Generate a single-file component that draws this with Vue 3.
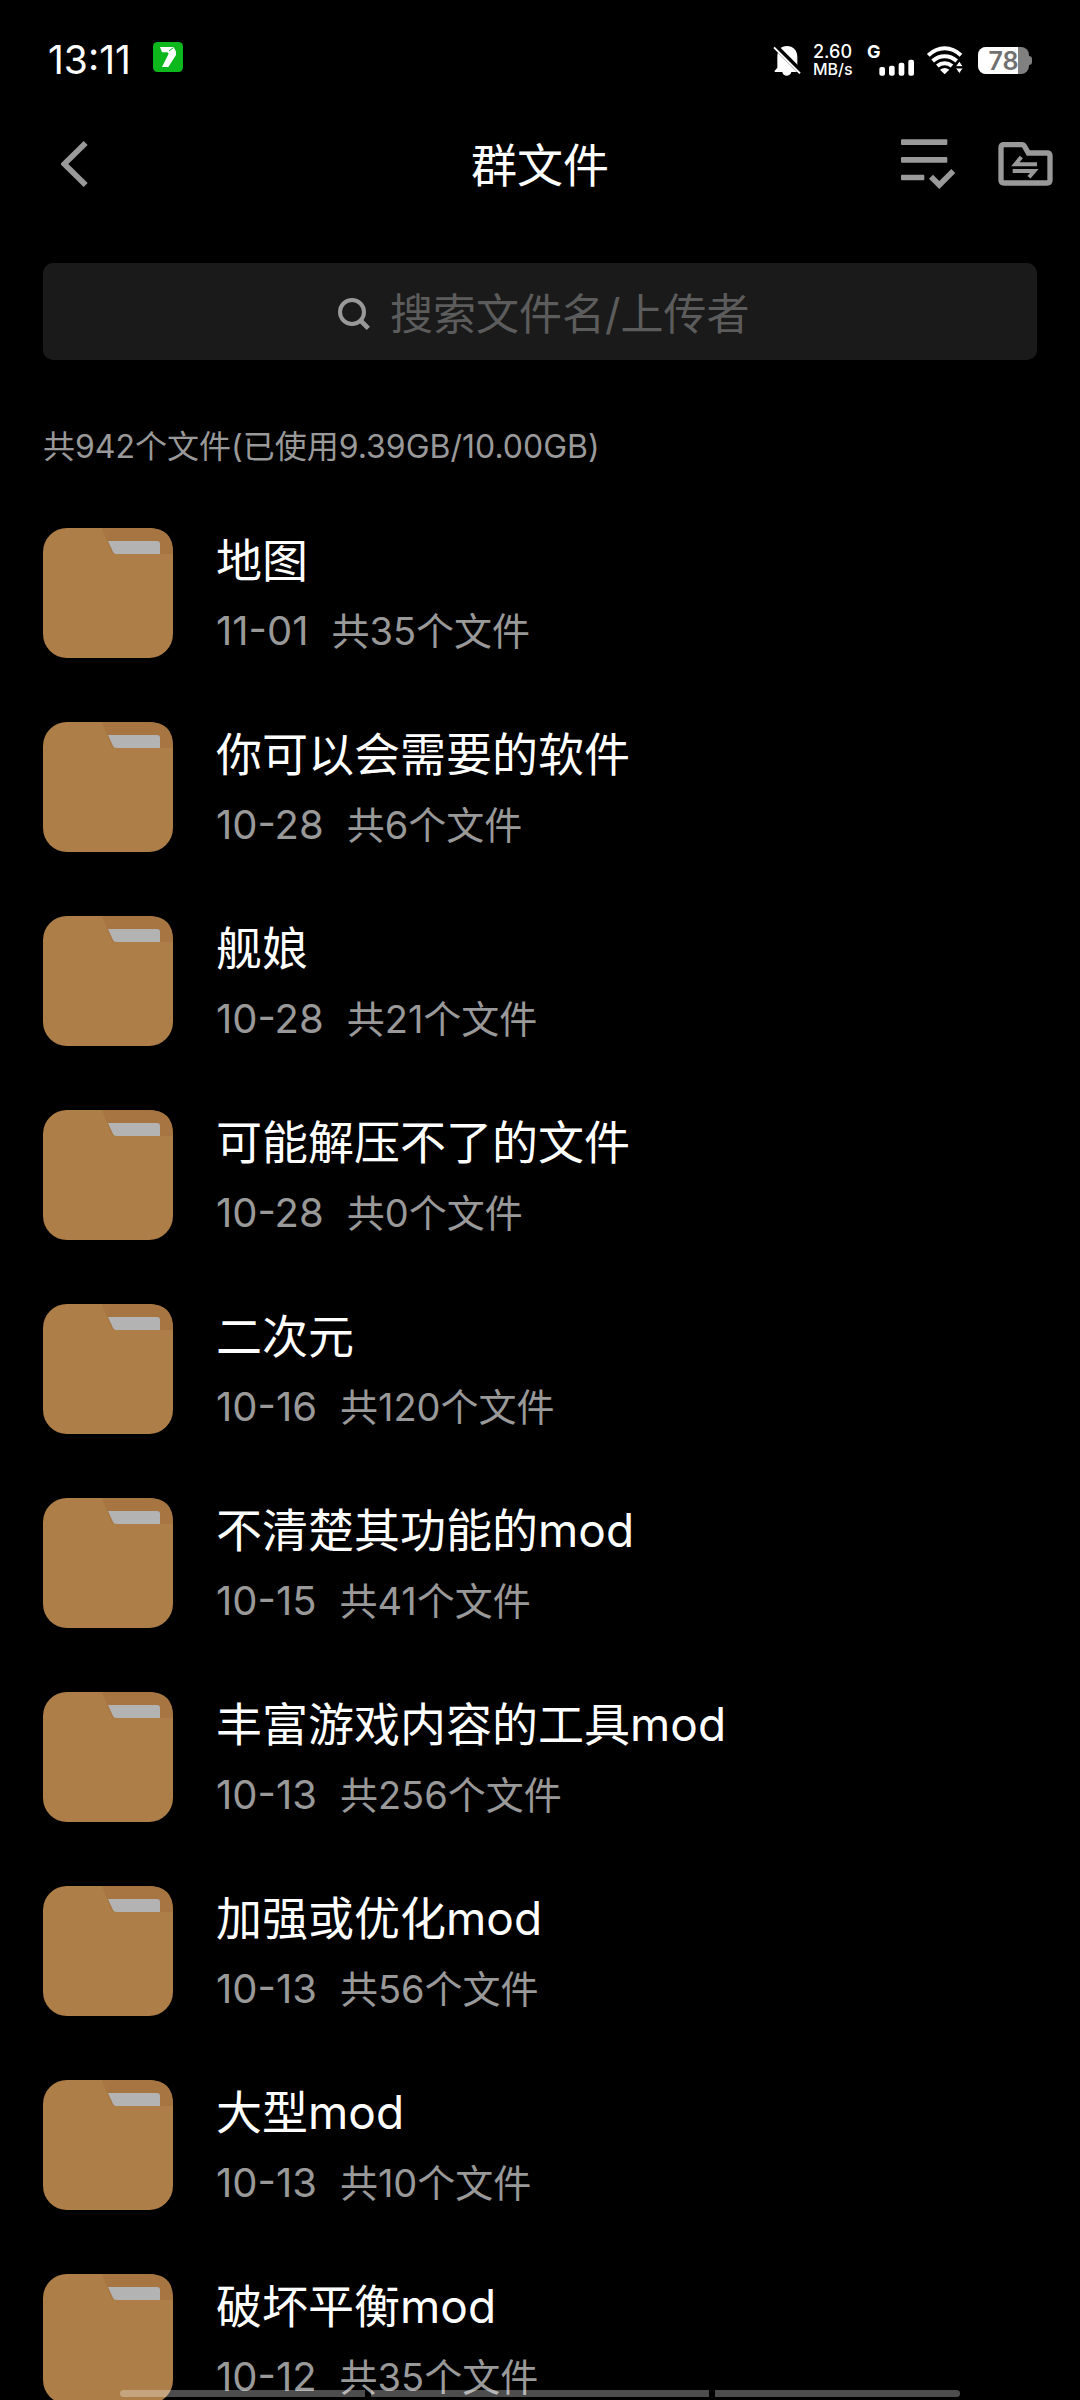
<template>
  <div class="page" lang="zh-CN">
    <div class="status">
      <span class="time">{{ state.time }}</span>
      <svg class="app-icon" width="30" height="30" viewBox="0 0 90 90">
        <rect width="90" height="90" rx="14" fill="#0db81d" />
        <path d="M21 15H62L69 29V39L46 75H27L47 35L43 31H27Z" fill="#fff" />
        <path d="M48 27L61 17" stroke="#0db81d" stroke-width="3" />
      </svg>
      <div class="status-right">
        <svg class="bell" width="28" height="31" viewBox="0 0 84 93">
          <path d="M13 68V35C13 14 24 3 42 3S73 16 73 35V65L78 81H55C52 96 30 96 28 81H5V77Z" fill="#fff" />
          <path d="M5 2L84 81" stroke="#000" stroke-width="16" />
          <path d="M3 7L81 85" stroke="#fff" stroke-width="6" />
        </svg>
        <div class="speed">
          <span>{{ state.speed }}</span>
          <span class="unit">MB/s</span>
        </div>
        <div class="signal">
          <span class="network">G</span>
          <svg width="36" height="17" viewBox="0 0 108 51">
            <g fill="#fff">
              <rect x="1" y="24" width="17" height="26" rx="6" />
              <rect x="30" y="20" width="17" height="30" rx="6" />
              <rect x="59" y="11" width="17" height="39" rx="6" />
              <rect x="88" y="2" width="17" height="48" rx="6" />
            </g>
          </svg>
        </div>
        <svg class="wifi" width="36" height="29" viewBox="0 0 108 87">
          <g fill="none" stroke="#fff" stroke-width="12">
            <path d="M4 28C34 0 72 0 102 28" />
            <path d="M17 45C38 26 68 26 89 45" />
            <path d="M31 60C44 49 62 49 75 60" />
          </g>
          <path d="M39 71Q53 61 67 71L53 85Z" fill="#fff" />
          <path d="M97 45L109 62H85ZM97 83L85 66H109Z" fill="#fff" stroke="#000" stroke-width="3" />
        </svg>
        <div class="battery">
          <div class="battery-body">
            <div class="battery-fill" :style="{ width: state.battery + '%' }"></div>
            <span class="battery-text">{{ state.battery }}</span>
          </div>
          <div class="battery-tip"></div>
        </div>
      </div>
    </div>

    <header class="header">
      <button class="icon-button" aria-label="返回">
        <svg width="27" height="46" viewBox="0 0 81 138">
          <path d="M74 6L10 69L74 132" fill="none" stroke="#999" stroke-width="17" />
        </svg>
      </button>
      <h1>群文件</h1>
      <div class="actions">
        <button class="icon-button" aria-label="多选">
          <svg width="54" height="50" viewBox="0 0 162 150">
            <g fill="#999">
              <rect y="1" width="139" height="17" rx="3" />
              <rect y="54" width="139" height="17" rx="3" />
              <rect y="107" width="70" height="17" rx="3" />
            </g>
            <path d="M90 113L115 138L157 96" fill="none" stroke="#999" stroke-width="17" />
          </svg>
        </button>
        <button class="icon-button" aria-label="传输列表">
          <svg width="55" height="44" viewBox="0 0 165 132">
            <g fill="none" stroke="#999">
              <path d="M18 8H73Q77 8 79 12L91 33H147Q156 33 156 42V114Q156 123 147 123H18Q9 123 9 114V17Q9 8 18 8Z" stroke-width="16" />
              <path d="M117 67H52L70 45M44 87H109L93 106" stroke-width="12" />
            </g>
          </svg>
        </button>
      </div>
    </header>

    <main>
      <label class="search">
        <svg width="32" height="32" viewBox="0 0 96 96">
          <circle cx="42" cy="42" r="36" fill="none" stroke="#999" stroke-width="12" />
          <path d="M66 66L91 91" stroke="#999" stroke-width="14" />
        </svg>
        <input v-model="state.keyword" type="text" placeholder="搜索文件名/上传者" aria-label="搜索文件名/上传者">
      </label>

      <p class="summary">共942个文件(已使用9.39GB/10.00GB)</p>

      <ul class="list">
        <li v-for="folder in folders" :key="folder.name">
          <a class="folder" href="#" @click.prevent>
            <svg class="folder-icon" width="130" height="130" viewBox="0 0 130 130">
              <rect width="130" height="130" rx="24" fill="#ad7e48" />
              <path d="M59 0H106Q130 0 130 24V26H72Q69 26 68 23Z" fill="#a67541" />
              <path d="M65 13H114Q117 13 117 16V26H73Q71 26 70 24Z" fill="#b3b3b3" />
            </svg>
            <div class="folder-text">
              <span class="name">{{ folder.name }}</span>
              <span class="meta">
                <span class="date">{{ folder.date }}</span>
                <span>共{{ folder.count }}个文件</span>
              </span>
            </div>
          </a>
        </li>
      </ul>
    </main>

    <div class="home-bar">
      <span></span>
      <span></span>
      <span></span>
    </div>
  </div>
</template>

<script setup>
import { reactive } from 'vue'

const state = reactive({
  time: '13:11',
  speed: '2.60',
  battery: 78,
  keyword: '',
})

const folders = [
  { name: '地图', date: '11-01', count: 35 },
  { name: '你可以会需要的软件', date: '10-28', count: 6 },
  { name: '舰娘', date: '10-28', count: 21 },
  { name: '可能解压不了的文件', date: '10-28', count: 0 },
  { name: '二次元', date: '10-16', count: 120 },
  { name: '不清楚其功能的mod', date: '10-15', count: 41 },
  { name: '丰富游戏内容的工具mod', date: '10-13', count: 256 },
  { name: '加强或优化mod', date: '10-13', count: 56 },
  { name: '大型mod', date: '10-13', count: 10 },
  { name: '破坏平衡mod', date: '10-12', count: 35 },
]
</script>

<style>
body {
  background: #000;
}
</style>

<style scoped>
.page {
  height: 100vh;
  overflow: hidden;
  background: #000;
  color: #fff;
  font-family: Inter, "Noto Sans CJK SC", sans-serif;
}

.status {
  height: 120px;
  padding: 0 48px;
  display: flex;
  align-items: center;
}

.time {
  font-size: 39px;
  line-height: 48px;
}

.app-icon {
  margin-left: 22px;
  margin-bottom: 6px;
}

.status-right {
  margin-left: auto;
  display: flex;
  align-items: center;
}

.bell {
  margin-right: 12px;
}

.speed {
  width: 42px;
  margin-right: 12px;
  display: flex;
  flex-direction: column;
  font-size: 18px;
  font-weight: 500;
  line-height: 18px;
}

.unit {
  font-size: 16px;
  line-height: 16px;
}

.signal {
  display: flex;
  align-items: flex-end;
  margin-right: 12px;
}

.network {
  align-self: flex-start;
  width: 12px;
  font-size: 18px;
  font-weight: 700;
  line-height: 16px;
  margin-bottom: 16px;
}

.wifi {
  margin-right: 15px;
}

.battery {
  display: flex;
  align-items: center;
}

.battery-body {
  position: relative;
  width: 51px;
  height: 27px;
  border-radius: 8px;
  background: #808080;
}

.battery-fill {
  height: 100%;
  border-radius: 8px 0 0 8px;
  background: #fff;
}

.battery-text {
  position: absolute;
  inset: 0;
  color: #707070;
  font-size: 25px;
  font-weight: 600;
  line-height: 28px;
  text-align: center;
}

.battery-tip {
  width: 3px;
  height: 9px;
  border-radius: 0 3px 3px 0;
  background: #808080;
}

.header {
  height: 88px;
  padding: 0 27px 0 61px;
  display: flex;
  align-items: center;
  justify-content: space-between;
}

.header > .icon-button,
.actions {
  flex: 1 1 0;
}

h1 {
  margin: 2px 34px 0 0;
  font-size: 46px;
  font-weight: 400;
  line-height: 64px;
}

.icon-button {
  display: flex;
  padding: 0;
  border: 0;
  background: none;
  cursor: pointer;
}

.actions {
  display: flex;
  align-items: center;
  justify-content: flex-end;
  gap: 43px;
}

main {
  padding: 55px 43px 0;
}

.search {
  box-sizing: border-box;
  height: 97px;
  padding: 4px 0 0 12px;
  display: flex;
  align-items: center;
  justify-content: center;
  gap: 20px;
  border-radius: 10px;
  background: #1a1a1a;
}

.search input {
  width: 364px;
  height: 64px;
  padding: 0;
  border: 0;
  outline: 0;
  background: none;
  color: #fff;
  font: inherit;
  font-size: 43px;
}

.search input::placeholder {
  color: #5c5c5c;
}

.summary {
  margin: 63px 0 57px;
  color: #999;
  font-size: 32px;
  line-height: 48px;
}

.list {
  margin: 0;
  padding: 0;
  list-style: none;
  display: flex;
  flex-direction: column;
  gap: 64px;
}

.folder {
  display: flex;
  gap: 43px;
  color: inherit;
  text-decoration: none;
}

.folder-icon {
  flex: none;
}

.folder-text {
  display: flex;
  flex-direction: column;
  gap: 15px;
}

.name {
  font-size: 46px;
  line-height: 64px;
}

.meta {
  display: flex;
  align-items: baseline;
  gap: 23px;
  color: #999;
  font-size: 38px;
  line-height: 48px;
}

.date {
  font-size: 40px;
}

.home-bar {
  position: fixed;
  left: 120px;
  right: 120px;
  bottom: 3px;
  height: 7px;
  display: grid;
  grid-template-columns: 245fr 338fr 245fr;
  gap: 6px;
  border-radius: 4px;
  overflow: hidden;
}

.home-bar span {
  background: rgba(255, 255, 255, 0.3);
}
</style>
